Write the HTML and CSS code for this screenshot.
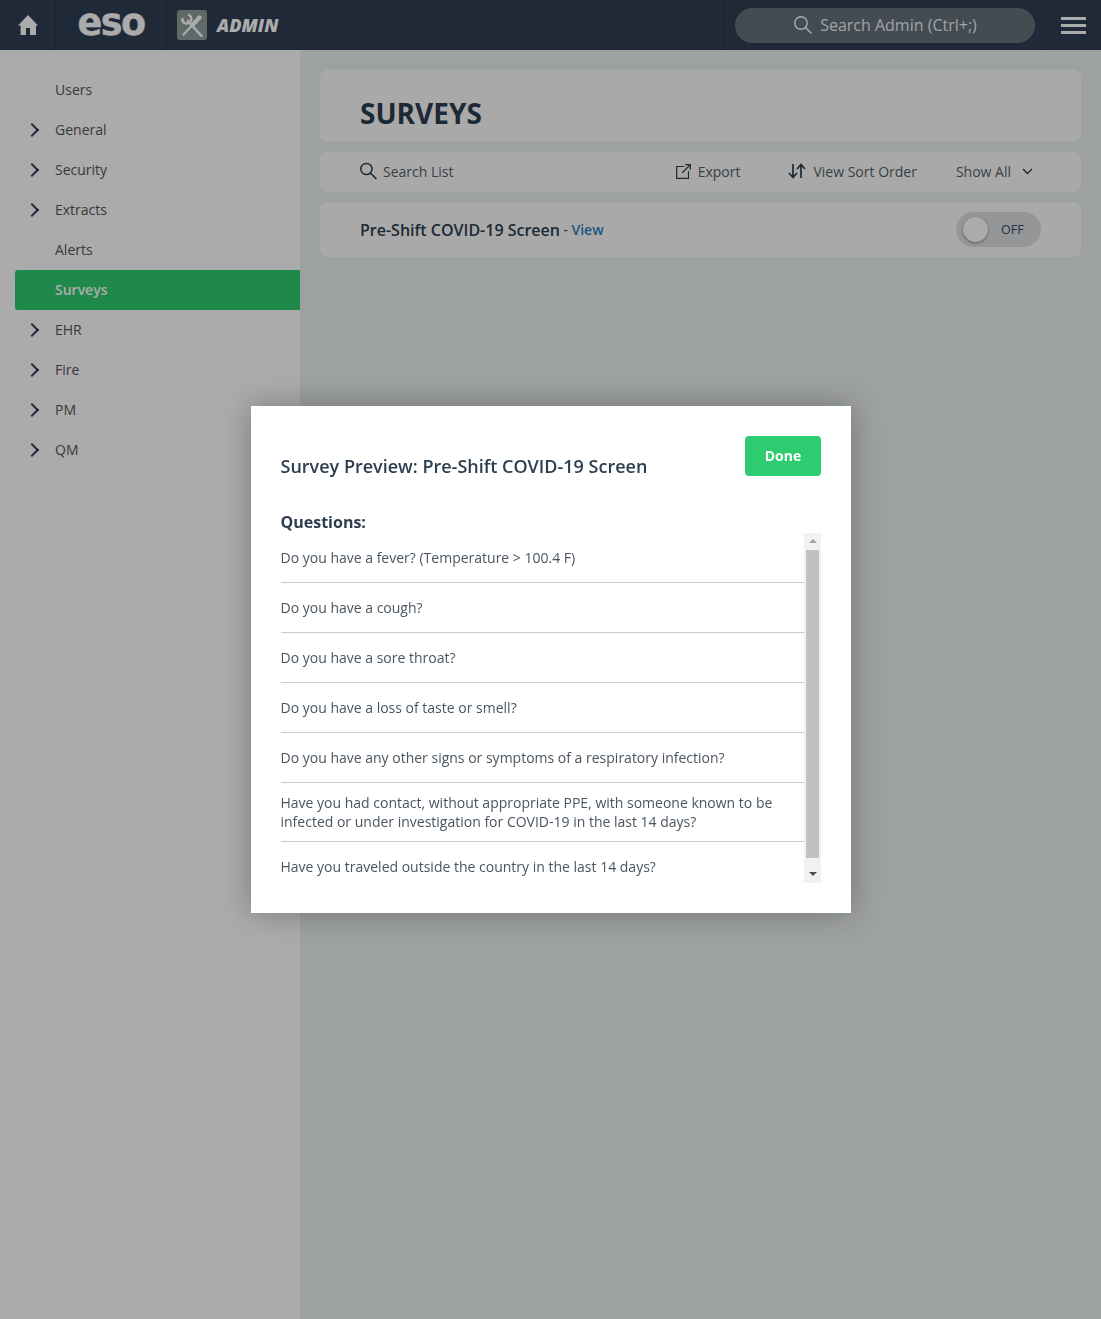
FILE: index.html
```html
<!DOCTYPE html>
<html lang="en">
<head>
<meta charset="utf-8">
<title>Surveys</title>
<link rel="stylesheet" href="styles.css">
</head>
<body>
<div class="app">
  <header class="topbar">
    <a class="top-home">
      <svg width="20" height="20" viewBox="0 0 20 20"><path class="fill-white" d="M10 0 L20 10.5 L18 10.5 L18 20 L12 20 L12 13 L8 13 L8 20 L2.6 20 L2.6 10.5 L0 10.5 Z"/></svg>
    </a>
    <div class="top-logo">eso</div>
    <div class="top-app">
      <span class="app-tile">
        <svg width="24" height="24" viewBox="0 0 24 24"><path class="stroke-white" d="M8 8 L21.5 23" stroke-width="2.6" stroke-linecap="round"/><path class="stroke-white" d="M2.6 5 A4.2 4.2 0 0 0 9.8 9 A4.2 4.2 0 0 0 8 1.6" stroke-width="2.4" fill="none"/><path class="stroke-white" d="M19.5 4.5 L12 12.5" stroke-width="4.4" stroke-linecap="round"/><path class="stroke-white" d="M13 11.5 L3.5 21.5" stroke-width="2.2" stroke-linecap="round"/></svg>
      </span>
      <span class="app-name">ADMIN</span>
    </div>
    <div class="top-search-wrap">
      <div class="top-search">
        <svg width="20" height="20" viewBox="0 0 20 20"><circle class="stroke-white" cx="8" cy="8" r="6.2" fill="none" stroke-width="1.4"/><path class="stroke-white" d="M12.5 12.5 L18.5 18.5" stroke-width="1.6"/></svg>
        <span>Search Admin (Ctrl+;)</span>
      </div>
    </div>
    <a class="top-menu"><i></i><i></i><i></i></a>
  </header>

  <div class="body-row">
    <nav class="sidebar">
      <a class="nav-item">Users</a>
      <a class="nav-item has-kids">General</a>
      <a class="nav-item has-kids">Security</a>
      <a class="nav-item has-kids">Extracts</a>
      <a class="nav-item">Alerts</a>
      <a class="nav-item active">Surveys</a>
      <a class="nav-item has-kids">EHR</a>
      <a class="nav-item has-kids">Fire</a>
      <a class="nav-item has-kids">PM</a>
      <a class="nav-item has-kids">QM</a>
    </nav>

    <main class="content">
      <section class="card title-card"><h1>SURVEYS</h1></section>
      <section class="card toolbar">
        <span class="tool tool-search">
          <svg width="18" height="18" viewBox="0 0 18 18"><circle class="stroke-dark" cx="6.4" cy="7" r="5.6" fill="none" stroke-width="1.5"/><path class="stroke-dark" d="M10.4 11 L16.4 17" stroke-width="1.7"/></svg>
          Search List
        </span>
        <span class="tool tool-export">
          <svg width="15" height="15" viewBox="0 0 15 15"><path class="stroke-dark" d="M8 2.5 H.7 V14.3 H12.5 V7 M6 9 L14 1 M9.2 .7 H14.3 V5.8" fill="none" stroke-width="1.2"/></svg>
          Export
        </span>
        <span class="tool tool-sort">
          <svg width="18" height="16" viewBox="0 0 18 16"><path class="stroke-dark" d="M5 1 V14 M1 10 L5 14.5 L9 10 M13 15 V2 M9 6 L13 1.5 L17 6" fill="none" stroke-width="1.7"/></svg>
          View Sort Order
        </span>
        <span class="tool tool-show">
          Show All
          <svg width="11" height="7" viewBox="0 0 11 7"><path class="stroke-dark" d="M1 1 L5.5 5.5 L10 1" fill="none" stroke-width="1.4"/></svg>
        </span>
      </section>
      <section class="card survey-row">
        <div class="survey-name"><strong>Pre-Shift COVID-19 Screen</strong><span class="sep">-</span><a class="view-link">View</a></div>
        <div class="toggle"><span class="knob"></span><span class="toggle-label">OFF</span></div>
      </section>
    </main>
  </div>
</div>

<div class="overlay">
  <div class="modal">
    <div class="modal-head">
      <h2>Survey Preview: Pre-Shift COVID-19 Screen</h2>
      <button class="btn-done">Done</button>
    </div>
    <h3>Questions:</h3>
    <div class="question-box">
      <ul class="questions">
        <li>Do you have a fever? (Temperature &gt; 100.4 F)</li>
        <li>Do you have a cough?</li>
        <li>Do you have a sore throat?</li>
        <li>Do you have a loss of taste or smell?</li>
        <li>Do you have any other signs or symptoms of a respiratory infection?</li>
        <li>Have you had contact, without appropriate PPE, with someone known to be infected or under investigation for COVID-19 in the last 14 days?</li>
        <li>Have you traveled outside the country in the last 14 days?</li>
      </ul>
      <div class="scrollbar">
        <span class="arrow-up"></span>
        <span class="thumb"></span>
        <span class="arrow-down"></span>
      </div>
    </div>
  </div>
</div>
</body>
</html>
```
FILE: styles.css
```css
* { box-sizing: border-box; }
html, body { margin: 0; height: 100%; }
body {
  font-family: "Open Sans", "Liberation Sans", sans-serif;
  font-size: 14px;
  color: #34495e;
  background: #ecf0f1;
  overflow: hidden;
}
h1, h2, h3, ul { margin: 0; padding: 0; }

.fill-white { fill: #fff; }
.stroke-white { stroke: #fff; }
.stroke-dark { stroke: #2c3e50; }

.app { height: 100vh; display: flex; flex-direction: column; }

.topbar {
  height: 50px;
  flex: none;
  display: flex;
  background: #2f3e52;
  color: #fff;
}
.top-home {
  width: 56px;
  display: flex;
  align-items: center;
  justify-content: center;
  border-right: 1px solid #283647;
}
.top-logo {
  width: 111px;
  display: flex;
  align-items: center;
  justify-content: center;
  border-right: 1px solid #283647;
  font-family: "DejaVu Sans", sans-serif;
  font-weight: 700;
  font-size: 36.5px;
  letter-spacing: -1.5px;
  line-height: 1;
  padding-bottom: 3px;
  -webkit-text-stroke: .4px #fff;
}
.top-app {
  width: 132px;
  display: flex;
  align-items: center;
  gap: 10px;
  padding-left: 10px;
  border-right: 1px solid #283647;
}
.app-tile {
  width: 30px;
  height: 30px;
  background: #8d9d9b;
  border-radius: 3px;
  display: flex;
  align-items: center;
  justify-content: center;
}
.app-name {
  font-weight: 800;
  font-style: italic;
  font-size: 18px;
}
.top-search-wrap {
  margin-left: auto;
  width: 321px;
  padding-left: 10px;
  border-left: 1px solid #283647;
  display: flex;
  align-items: center;
}
.top-search {
  width: 300px;
  height: 35px;
  border-radius: 18px;
  background: #65717d;
  display: flex;
  align-items: center;
  justify-content: center;
  gap: 7px;
  font-size: 16px;
  color: #f0f0f0;
}
.top-menu {
  width: 56px;
  display: flex;
  flex-direction: column;
  align-items: center;
  justify-content: center;
  gap: 4px;
  border-left: 1px solid #283647;
}
.top-menu i {
  width: 25px;
  height: 3px;
  background: #fff;
}

.body-row { flex: 1; display: flex; min-height: 0; }

.sidebar {
  width: 300px;
  flex: none;
  background: #fff;
  padding: 20px 0 0 15px;
}
.nav-item {
  display: block;
  height: 40px;
  line-height: 40px;
  padding-left: 40px;
  color: #555;
  position: relative;
}
.nav-item.has-kids::before {
  content: "";
  position: absolute;
  left: 12px;
  top: 15px;
  width: 8px;
  height: 8px;
  border-top: 2px solid #2c3e50;
  border-right: 2px solid #2c3e50;
  transform: rotate(45deg);
}
.nav-item.active {
  background: #2ecc71;
  color: #fff;
  font-weight: 600;
  border-radius: 3px 0 0 3px;
}

.content {
  flex: 1;
  padding: 20px;
  display: flex;
  flex-direction: column;
  gap: 10px;
}
.card {
  background: #fdfdfd;
  border-radius: 8px;
  padding: 0 40px;
  display: flex;
  align-items: center;
}
.title-card { height: 72px; padding-top: 14px; }
.title-card h1 {
  font-size: 28px;
  font-weight: 700;
  color: #2c3e50;
}
.toolbar { height: 40px; padding-right: 48px; padding-bottom: 2px; }
.tool { display: flex; align-items: center; color: #555f68; }
.tool-search { gap: 5px; }
.tool-export { margin-left: auto; gap: 7px; }
.tool-sort { margin-left: 48px; gap: 7px; }
.tool-show { margin-left: 39px; gap: 11px; }

.survey-row { height: 55px; justify-content: space-between; }
.survey-name { display: flex; align-items: center; gap: 3.5px; color: #2c3e50; }
.survey-name strong { font-size: 16px; font-weight: 600; }
.view-link { color: #2980b9; font-weight: 600; }
.toggle {
  width: 85px;
  height: 35px;
  border-radius: 18px;
  background: #dde0e3;
  display: flex;
  align-items: center;
  padding-left: 7px;
}
.knob {
  width: 25px;
  height: 25px;
  border-radius: 50%;
  background: #fff;
  box-shadow: 0 1px 3px rgba(0,0,0,.4);
}
.toggle-label { margin-left: 13px; font-size: 12.5px; color: #34495e; }

.overlay {
  position: fixed;
  inset: 0;
  background: rgba(0,0,0,.33);
  display: flex;
  align-items: center;
  justify-content: center;
  padding-left: 1px;
}
.modal {
  width: 600px;
  height: 507px;
  background: #fff;
  padding: 30px 30px 30px 29.5px;
  box-shadow: 0 0 30px rgba(0,0,0,.3);
}
.modal-head {
  display: flex;
  justify-content: space-between;
  align-items: flex-start;
  height: 40px;
}
.modal-head h2 {
  font-size: 18px;
  font-weight: 600;
  line-height: 24px;
  color: #2c3e50;
  margin-top: 18px;
}
.btn-done {
  width: 76px;
  height: 40px;
  border: 0;
  border-radius: 4px;
  padding: 0 0 2px;
  background: #2ecc71;
  color: #fff;
  font: 700 14px "Open Sans", sans-serif;
}
h3 {
  margin-top: 35px;
  font-size: 16px;
  font-weight: 700;
  line-height: 22px;
  color: #2c3e50;
}
.question-box {
  height: 350px;
  display: flex;
  overflow: hidden;
}
.questions {
  flex: 1;
  list-style: none;
}
.questions li {
  min-height: 50px;
  padding: 10px 20px 10px 0;
  line-height: 19px;
  display: flex;
  align-items: center;
  border-bottom: 1px solid #c9c9c9;
  color: #4a5560;
}
.questions li:last-child { border-bottom-color: transparent; }

.scrollbar {
  width: 17px;
  flex: none;
  background: #f1f1f1;
  display: flex;
  flex-direction: column;
  align-items: center;
}
.thumb {
  width: 13px;
  height: 308px;
  background: #c1c1c1;
}
.arrow-up, .arrow-down {
  width: 0;
  height: 0;
  border-left: 4px solid transparent;
  border-right: 4px solid transparent;
}
.arrow-up {
  border-bottom: 4px solid #a3a3a3;
  margin: 6px 0 7px;
}
.arrow-down {
  border-top: 4px solid #505050;
  margin-top: 14px;
}
```
